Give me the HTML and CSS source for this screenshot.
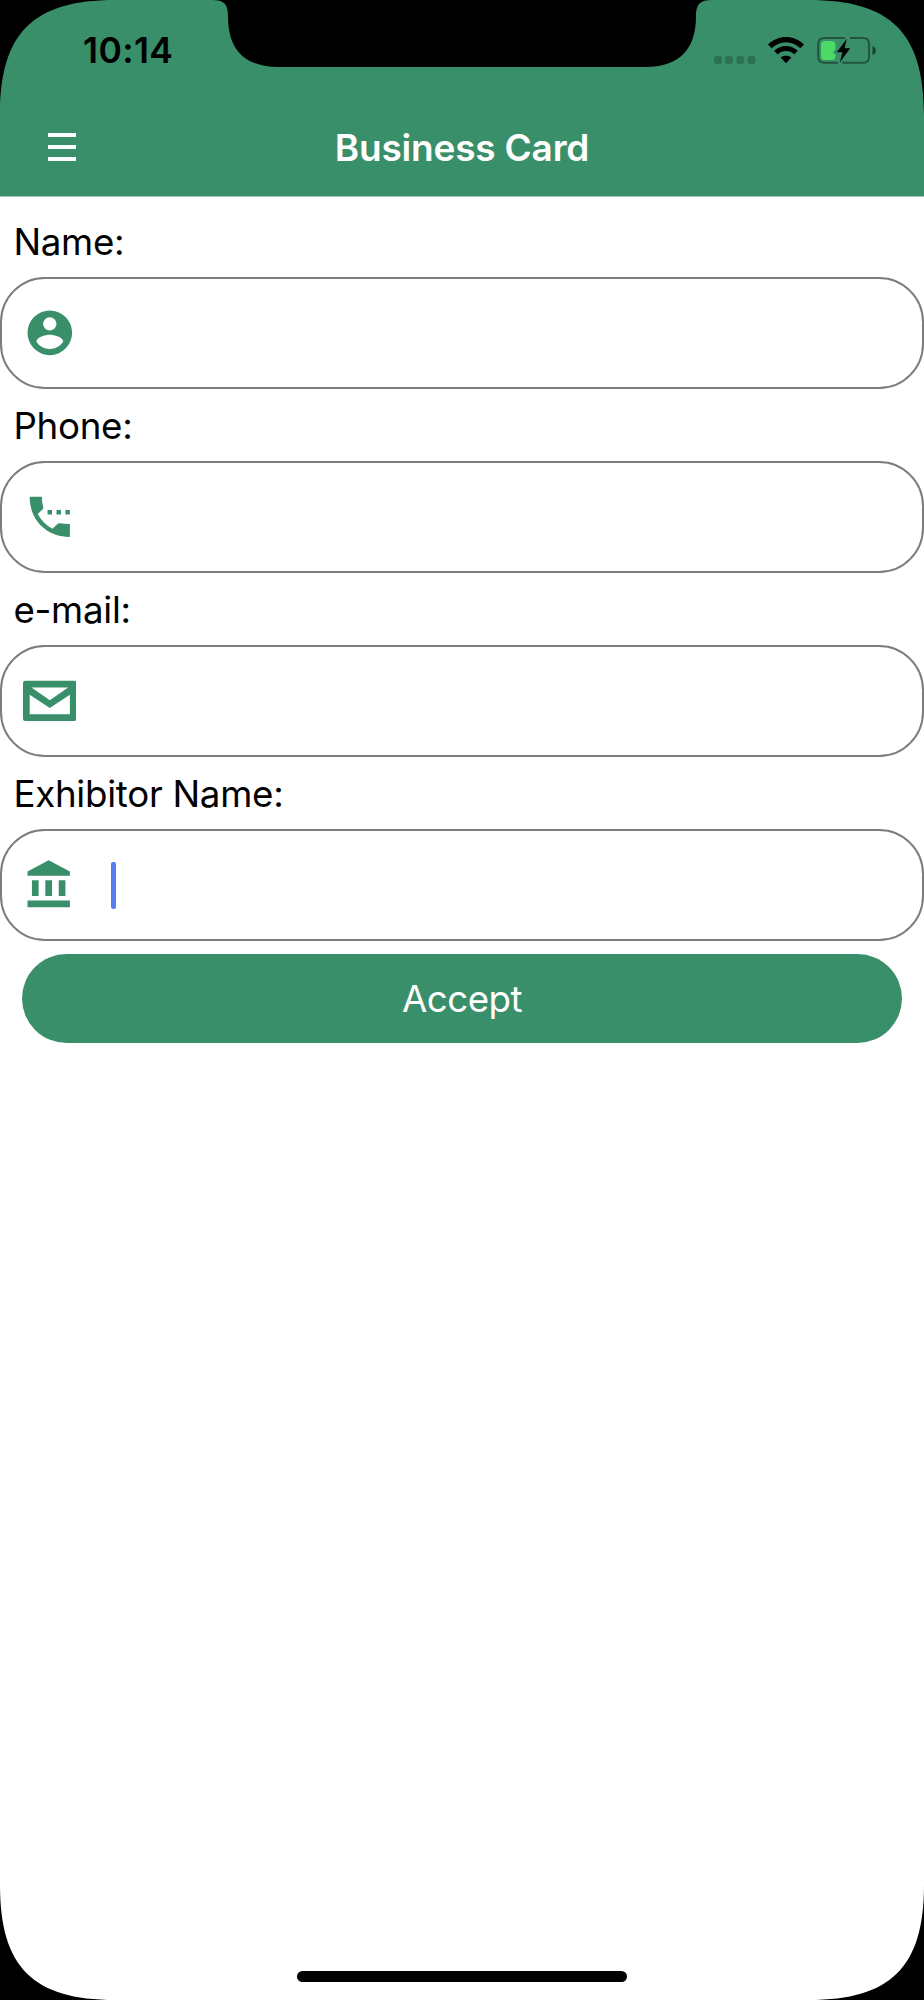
FILE: index.html
```html
<!DOCTYPE html>
<html lang="en">
<head>
<meta charset="utf-8">
<title>Business Card</title>
<link rel="stylesheet" href="styles.css">
</head>
<body>
<div class="phone">
  <header class="header">
    <div class="status">
      <span class="time">10:14</span>
      <svg class="indicators" width="166" height="30" viewBox="712 35 166 30">
        <g fill="#000" opacity=".2">
          <rect x="714" y="56" width="8" height="8" rx="2.8"/><rect x="725" y="56" width="8" height="8" rx="2.8"/><rect x="736.3" y="56" width="8" height="8" rx="2.8"/><rect x="747.5" y="56" width="8" height="8" rx="2.8"/>
        </g>
        <path d="M768 44.5C778 34.5 794 34.5 804 44.5L800.3 48.2C792 40.2 780 40.2 771.7 48.2ZM774.2 50.8C780.8 44.3 791.2 44.3 797.8 50.8L794.2 54.4C789.5 50 782.5 50 777.8 54.4ZM780.6 57.5C783.6 55 788.4 55 791.4 57.5L786 63.2Z"/>
        <g fill="none" stroke="#000" stroke-opacity=".42" stroke-width="2">
          <path d="M838 62.8H824.5Q818.2 62.8 818.2 56.5V44.2Q818.2 37.9 824.5 37.9H845M850 37.9H862.8Q869.1 37.9 869.1 44.2V56.5Q869.1 62.8 862.8 62.8H842"/>
        </g>
        <path d="M872.5 46Q875.8 47.2 875.8 50.5T872.5 55Z" fill-opacity=".55"/>
        <path d="M825 41H831.5Q835.5 41 835.5 45V49L833.2 52.5Q833 54 835.5 54V56Q835.5 60 831.5 60H825Q821 60 821 56V45Q821 41 825 41Z" fill="#4cd964"/>
        <path d="M846.8 38.8L836.8 52.2H842.4L839.8 62.4L850.2 48.3H844.6Z"/>
      </svg>
    </div>
    <div class="navbar">
      <svg class="menu" width="28" height="28" viewBox="0 0 28 28"><path d="M0 2H28M0 14H28M0 26H28" stroke="#fff" stroke-width="4"/></svg>
      <h1 class="title">Business Card</h1>
    </div>
  </header>
  <main class="form">
    <label class="label">Name:</label>
    <div class="field">
      <svg class="icon" viewBox="0 0 24 24"><path fill-rule="evenodd" d="M12 2a10 10 0 1 0 0 20a10 10 0 0 0 0-20zM12 5a3 3 0 1 1 0 6a3 3 0 0 1 0-6zM12 19.2c-2.5 0-4.71-1.28-6-3.22c.03-1.99 4-3.08 6-3.08s5.97 1.09 6 3.08c-1.29 1.94-3.5 3.22-6 3.22z"/></svg>
    </div>
    <label class="label">Phone:</label>
    <div class="field">
      <svg class="icon" viewBox="0 0 24 24"><path d="M13 9h-2v2h2V9zm4 0h-2v2h2V9zm4 6.200q-3-.05-4.570-.27c-.35-.11-.74-.03-1.020.24l-2.200 2.200c-2.830-1.440-5.150-3.750-6.590-6.580l2.200-2.210c.28-.27.36-.66.25-1.010C8.700 6.450 8.500 5.250 8.500 3.300Q8.500 3 8.200 3H3.300Q3 3 3 3.300C3 13.390 10.610 21 20.700 21Q21 21 21 20.700zM19 9v2h2V9h-2z"/></svg>
    </div>
    <label class="label">e-mail:</label>
    <div class="field">
      <svg class="icon" viewBox="0 0 24 24"><path fill-rule="evenodd" d="M1 3H23Q24 3 24 4V20Q24 21 23 21H1Q0 21 0 20V4Q0 3 1 3ZM3 9.300V18H21V9.300L12 15.200ZM3.800 6L12 11.700L20.200 6Z"/></svg>
    </div>
    <label class="label">Exhibitor Name:</label>
    <div class="field">
      <svg class="icon" viewBox="0 0 24 24"><path d="M4 10v7h3v-7H4zm6 0v7h3v-7h-3zM2 22h19v-3H2v3zm14-12v7h3v-7h-3zm-4.500-9L2 6v2h19V6l-9.500-5z"/></svg>
      <span class="caret"></span>
    </div>
    <button class="accept" type="button">Accept</button>
  </main>
  <svg class="bezel" width="924" height="2000" viewBox="0 0 924 2000">
    <path d="M0 0H115C33 0 0 33 0 115ZM924 0H809C891 0 924 33 924 115ZM0 2000V1885C0 1967 33 2000 115 2000ZM924 2000V1885C924 1967 891 2000 809 2000Z"/>
    <path d="M212 0C224 0 228 4 228 16C228 50 245 67 279 67H645C679 67 696 50 696 16C696 4 700 0 712 0Z"/>
    <rect x="297" y="1971" width="330" height="11" rx="5.5"/>
  </svg>
</div>
</body>
</html>
```
FILE: styles.css
```css
body {
  margin: 0;
  background: #fff;
  font-family: Inter, "Liberation Sans", sans-serif;
}

.phone {
  position: relative;
  width: 924px;
  height: 2000px;
  overflow: hidden;
  background: #fff;
}

.header {
  box-sizing: border-box;
  height: 197px;
  background: #398f69;
  border-bottom: 1px solid #9fc3b3;
}

.status {
  display: flex;
  justify-content: space-between;
  height: 98px;
  padding: 35px 46px 0 83px;
  box-sizing: border-box;
}

.time {
  font-size: 35.5px;
  font-weight: 600;
  line-height: 31px;
  letter-spacing: 0.4px;
}

.navbar {
  display: grid;
  grid-template-columns: 1fr auto 1fr;
  align-items: center;
  height: 98px;
  padding: 0 48px;
}

.title {
  margin: 0;
  font-size: 37px;
  font-weight: 600;
  line-height: 44px;
  letter-spacing: -0.2px;
  padding-top: 1px;
  color: #fff;
}

.form {
  display: flex;
  flex-direction: column;
  padding-top: 13px;
}

.label {
  height: 67px;
  padding-left: 13.4px;
  font-size: 36.7px;
  line-height: 63px;
  letter-spacing: -0.27px;
  color: #000;
  white-space: nowrap;
}

.field {
  display: flex;
  align-items: center;
  box-sizing: border-box;
  height: 112px;
  margin-bottom: 5px;
  padding-left: 20.6px;
  border: 2px solid #7d7d7d;
  border-radius: 45px;
}

.icon {
  width: 53.6px;
  height: 53.6px;
  fill: #398f69;
}

.caret {
  width: 4.5px;
  height: 47px;
  margin-left: 35.3px;
  border-radius: 2px;
  background: #587cf5;
}

.accept {
  height: 89px;
  margin: 8px 22px 0;
  padding: 0;
  border: 0;
  border-radius: 44.5px;
  background: #398f69;
  color: #fff;
  font-family: inherit;
  font-size: 36.7px;
  letter-spacing: -0.5px;
}

.bezel {
  position: absolute;
  top: 0;
  left: 0;
}
```
